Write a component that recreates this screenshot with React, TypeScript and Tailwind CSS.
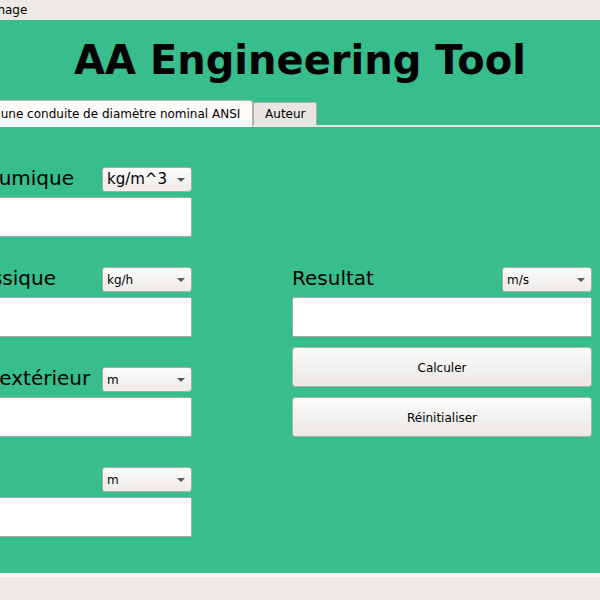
import React from "react";

const Combo: React.FC<{ value: string; big?: boolean }> = ({ value, big }) => (
  <div className="w-[90px] h-[25px] flex items-center justify-between pl-[4px] pr-[6px] border border-[#aeaba6] rounded-[3px] bg-gradient-to-b from-[#fdfcfc] to-[#eeebe8]">
    <span className={big ? "text-[15px] leading-none text-black" : "text-[12px] leading-none text-black"}>
      {value}
    </span>
    <div className="w-0 h-0 border-l-[4px] border-r-[4px] border-t-[4px] border-l-transparent border-r-transparent border-t-[#585858]" />
  </div>
);

const Field: React.FC<{ label: string; unit: string; big?: boolean }> = ({ label, unit, big }) => (
  <div className="flex flex-col">
    <div className="flex items-center justify-between h-[25px]">
      <span className="text-[20px] text-black whitespace-nowrap pb-[4px]">{label}</span>
      <Combo value={unit} big={big} />
    </div>
    <div className="mt-[5px] h-[40px] bg-white border border-[#a9a9a9] rounded-[2px]" />
  </div>
);

const Button: React.FC<{ label: string }> = ({ label }) => (
  <button className="mt-[10px] h-[40px] w-full flex items-center justify-center pt-[1px] text-[12px] text-black border border-[#b3b0ab] rounded-[3px] bg-gradient-to-b from-[#fbfbfa] to-[#ebe8e5]">
    {label}
  </button>
);

export default function App() {
  const fields = [
    { label: "Masse volumique", unit: "kg/m^3", big: true },
    { label: "Débit massique", unit: "kg/h" },
    { label: "Diamètre extérieur", unit: "m" },
    { label: "Épaisseur", unit: "m" },
  ];

  return (
    <div className="h-screen w-[600px] overflow-hidden flex flex-col bg-[#edeae6] font-['DejaVu_Sans',sans-serif] text-black">
      {/* Menu bar */}
      <div className="h-[20px] flex items-center text-[12px] whitespace-nowrap">
        <span className="ml-[-29px]">Affichage</span>
      </div>

      {/* Main window */}
      <div className="flex-1 bg-[#38bd8c] flex flex-col">
        <h1 className="pt-[20px] text-[40px] leading-none font-bold text-center">
          AA Engineering Tool
        </h1>

        {/* Tabs */}
        <div className="mt-[20px] flex items-end h-[27px] whitespace-nowrap text-[12px]">
          <div className="ml-[-92px] h-[27px] px-[12px] flex items-center bg-[#fcfbfa] border border-b-0 border-[#b9b5b0] rounded-t-[3px]">
            Vitesse dans une conduite de diamètre nominal ANSI
          </div>
          <div className="h-[25px] border-b-2 border-b-[#ece9e5]">
            <div className="h-[23px] w-[64px] flex items-center justify-center bg-[#e9e6e2] border border-b-0 border-[#b0aca6] rounded-t-[2px]">
              Auteur
            </div>
          </div>
          <div className="flex-1 h-[2px] bg-[#ece9e5]" />
        </div>

        {/* Pane */}
        <div className="flex gap-[100px] ml-[-100px] pt-[40px]">
          <div className="w-[292px] flex flex-col gap-[30px]">
            {fields.map((f, i) => (
              <Field key={i} label={f.label} unit={f.unit} big={f.big} />
            ))}
          </div>
          <div className="w-[300px] flex flex-col pt-[100px]">
            <Field label="Resultat" unit="m/s" />
            <Button label="Calculer" />
            <Button label="Réinitialiser" />
          </div>
        </div>
      </div>

      <div className="h-[4px] bg-[#fcf9f6]" />
      <div className="h-[23px] bg-[#edeae6]" />
    </div>
  );
}
